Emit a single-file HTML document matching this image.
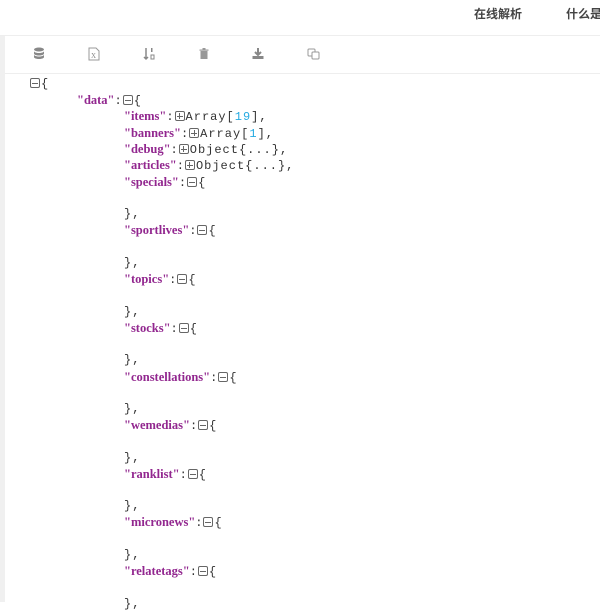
<!DOCTYPE html>
<html><head><meta charset="utf-8"><style>
body{margin:0;width:600px;height:602px;overflow:hidden;background:#fff;font-family:"Liberation Sans","Noto Sans CJK SC",sans-serif;position:relative}
.hdr{position:absolute;left:0;top:0;width:600px;height:35px;border-bottom:1px solid #eee}
.nav{position:absolute;top:5px;font-size:12px;font-weight:bold;color:#444;white-space:nowrap}
.strip{position:absolute;left:0;top:36px;width:5px;height:566px;background:#f0f0f0}
.tb{position:absolute;left:5px;top:36px;width:595px;height:37px;border-bottom:1px solid #eee}
.ic{position:absolute;top:47px}
.ln{position:absolute;height:16px;line-height:16px;white-space:pre;font-family:"Liberation Mono",monospace;font-size:12px;color:#333;letter-spacing:1px}
.k{font-family:"Liberation Serif",serif;font-weight:bold;color:#92278f;font-size:12.5px;letter-spacing:0}
.n{color:#25aae1}
.b{display:inline-block;width:8px;height:8px;border:1px solid #666;border-radius:2px;position:relative;vertical-align:-1px;margin-right:1px}
.b:before{content:"";position:absolute;left:1px;right:1px;top:3.5px;height:1px;background:#666}
.p:after{content:"";position:absolute;top:1px;bottom:1px;left:3.5px;width:1px;background:#666}
</style></head><body>
<div class="hdr"></div>
<div class="nav" style="left:474px">在线解析</div>
<div class="nav" style="left:566px">什么是</div>
<div class="strip"></div>
<div class="tb"></div>
<svg class="ic" style="left:33px" width="12" height="14" viewBox="0 0 12 14"><ellipse cx="6" cy="2.5" rx="5" ry="2" fill="#888"/><path d="M1 4v2.5c0 1.2 2.2 2 5 2s5-.8 5-2V4c0 1.2-2.2 2-5 2S1 5.2 1 4zM1 7.5V10c0 1.2 2.2 2 5 2s5-.8 5-2V7.5c0 1.2-2.2 2-5 2S1 8.7 1 7.5z" fill="#888"/></svg>
<svg class="ic" style="left:88px" width="12" height="14" viewBox="0 0 12 14"><path d="M1 1h7l3 3v9H1z" fill="none" stroke="#999"/><text x="3" y="11" font-size="7" fill="#888" font-family="Liberation Serif">X</text></svg>
<svg class="ic" style="left:143px" width="12" height="14" viewBox="0 0 12 14"><path d="M3 1v11M1 10l2 2 2-2" stroke="#888" fill="none" stroke-width="1.5"/><rect x="8" y="1" width="1.5" height="4" fill="#888"/><rect x="8" y="8" width="3" height="4" fill="none" stroke="#888"/></svg>
<svg class="ic" style="left:199px" width="10" height="14" viewBox="0 0 10 14"><rect x="1.5" y="4" width="7" height="8" fill="#999"/><rect x="0.5" y="2.5" width="9" height="1.2" fill="#999"/><rect x="3.5" y="1" width="3" height="1.5" fill="#999"/></svg>
<svg class="ic" style="left:252px" width="12" height="14" viewBox="0 0 12 14"><path d="M6 1v6M3 5l3 3 3-3" stroke="#888" fill="none" stroke-width="2"/><rect x="0.5" y="9" width="11" height="3" fill="#888"/></svg>
<svg class="ic" style="left:307px" width="13" height="14" viewBox="0 0 13 14"><rect x="1" y="2" width="7" height="7" rx="1" fill="none" stroke="#999"/><rect x="5" y="5" width="7" height="7" rx="1" fill="#fff" stroke="#999"/></svg>
<div class="ln" style="left:30px;top:76px"><span class="b"></span>{</div>
<div class="ln" style="left:77px;top:92px"><span class="k">"data"</span>:<span class="b"></span>{</div>
<div class="ln" style="left:124px;top:108px"><span class="k">"items"</span>:<span class="b p"></span>Array[<span class="n">19</span>],</div>
<div class="ln" style="left:124px;top:125px"><span class="k">"banners"</span>:<span class="b p"></span>Array[<span class="n">1</span>],</div>
<div class="ln" style="left:124px;top:141px"><span class="k">"debug"</span>:<span class="b p"></span>Object{...},</div>
<div class="ln" style="left:124px;top:157px"><span class="k">"articles"</span>:<span class="b p"></span>Object{...},</div>
<div class="ln" style="left:124px;top:174px"><span class="k">"specials"</span>:<span class="b"></span>{</div>
<div class="ln" style="left:124px;top:206px">},</div>
<div class="ln" style="left:124px;top:222px"><span class="k">"sportlives"</span>:<span class="b"></span>{</div>
<div class="ln" style="left:124px;top:255px">},</div>
<div class="ln" style="left:124px;top:271px"><span class="k">"topics"</span>:<span class="b"></span>{</div>
<div class="ln" style="left:124px;top:304px">},</div>
<div class="ln" style="left:124px;top:320px"><span class="k">"stocks"</span>:<span class="b"></span>{</div>
<div class="ln" style="left:124px;top:352px">},</div>
<div class="ln" style="left:124px;top:369px"><span class="k">"constellations"</span>:<span class="b"></span>{</div>
<div class="ln" style="left:124px;top:401px">},</div>
<div class="ln" style="left:124px;top:417px"><span class="k">"wemedias"</span>:<span class="b"></span>{</div>
<div class="ln" style="left:124px;top:450px">},</div>
<div class="ln" style="left:124px;top:466px"><span class="k">"ranklist"</span>:<span class="b"></span>{</div>
<div class="ln" style="left:124px;top:498px">},</div>
<div class="ln" style="left:124px;top:514px"><span class="k">"micronews"</span>:<span class="b"></span>{</div>
<div class="ln" style="left:124px;top:547px">},</div>
<div class="ln" style="left:124px;top:563px"><span class="k">"relatetags"</span>:<span class="b"></span>{</div>
<div class="ln" style="left:124px;top:596px">},</div>
</body></html>
